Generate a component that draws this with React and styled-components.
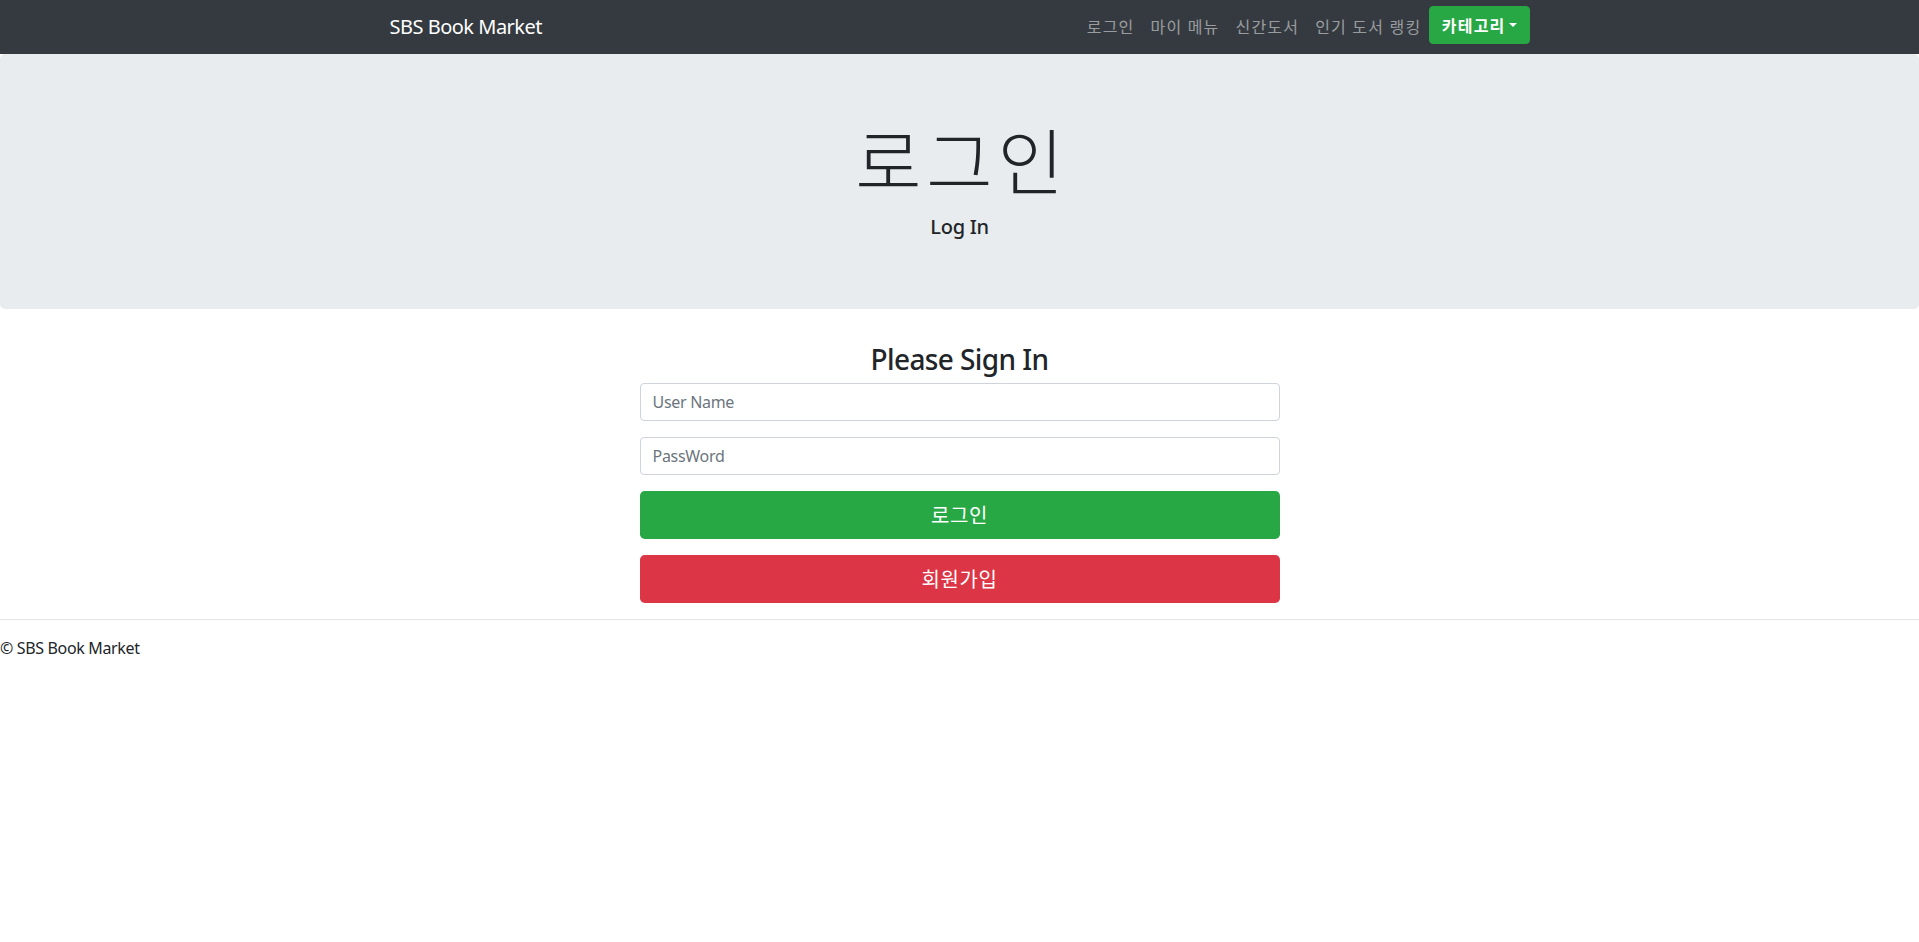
import React from "react";
import styled, { createGlobalStyle } from "styled-components";

const Global = createGlobalStyle`
  html, body { margin: 0; padding: 0; background: #fff; }
  body {
    font-family: "Noto Sans", "Noto Sans CJK KR", sans-serif;
    font-size: 16px;
    line-height: 1.5;
    color: #212529;
  }
  * { box-sizing: border-box; }
`;

const Navbar = styled.nav`
  background: #343a40;
  height: 54px;
`;

const NavContainer = styled.div`
  width: 1140px;
  height: 100%;
  margin: 0 auto;
  display: flex;
  align-items: center;
  justify-content: space-between;
`;

const Brand = styled.a`
  color: #fff;
  font-size: 20px;
  line-height: 30px;
  letter-spacing: -0.5px;
  text-decoration: none;
`;

const NavList = styled.div`
  display: flex;
  align-items: center;
`;

const NavLink = styled.a`
  color: rgba(255, 255, 255, 0.5);
  padding: 8px 7.4px 8px 8.6px;
  font-size: 16px;
  letter-spacing: 1.2px;
  text-decoration: none;
  white-space: nowrap;
`;

const DropButton = styled.button`
  display: flex;
  align-items: center;
  height: 38px;
  margin-bottom: 4px;
  padding: 6px 12px;
  border: 1px solid #28a745;
  border-radius: 4px;
  background: #28a745;
  color: #fff;
  font-family: inherit;
  font-size: 16px;
  font-weight: 700;
  letter-spacing: 1.2px;
  cursor: pointer;
  &::after {
    content: "";
    display: inline-block;
    margin-left: 3px;
    border-top: 4.8px solid #fff;
    border-left: 4.8px solid transparent;
    border-right: 4.8px solid transparent;
  }
`;

const Jumbotron = styled.header`
  background: #e9ecef;
  border-radius: 4.8px;
  padding: 64px 32px 67px;
  margin-bottom: 32px;
  text-align: center;
`;

const Display = styled.h1`
  margin: 0 0 8px;
  font-size: 72px;
  font-weight: 300;
  line-height: 1.2;
  letter-spacing: 5px;
  text-indent: 5px;
`;

const Lead = styled.p`
  margin: 0;
  font-size: 20px;
  line-height: 30px;
  font-weight: 500;
  letter-spacing: -0.3px;
`;

const Form = styled.form`
  width: 640px;
  margin: 0 auto;
  display: flex;
  flex-direction: column;
`;

const Heading = styled.h3`
  margin: 0 0 6px;
  padding-top: 2px;
  font-size: 28px;
  font-weight: 500;
  line-height: 1.2;
  letter-spacing: -0.6px;
  text-align: center;
`;

const Input = styled.input`
  height: 38px;
  padding: 6px 12px;
  margin-bottom: 16px;
  border: 1px solid #ced4da;
  border-radius: 4px;
  font-family: inherit;
  font-size: 16px;
  letter-spacing: -0.3px;
  color: #495057;
  &::placeholder { color: #6c757d; }
`;

const BigButton = styled.button`
  height: 48px;
  border: none;
  border-radius: 4.8px;
  background: ${(p) => p.$bg};
  color: #fff;
  font-family: inherit;
  font-size: 20px;
  letter-spacing: 0.6px;
  margin-bottom: ${(p) => p.$mb}px;
  cursor: pointer;
`;

const Rule = styled.hr`
  margin: 16px 0;
  border: 0;
  border-top: 1px solid rgba(0, 0, 0, 0.1);
`;

const FooterText = styled.p`
  margin: 0 0 16px;
  font-size: 16px;
  letter-spacing: -0.35px;
`;

export default function App() {
  return (
    <>
      <Global />
      <Navbar>
        <NavContainer>
          <Brand href="#">SBS Book Market</Brand>
          <NavList>
            <NavLink href="#">로그인</NavLink>
            <NavLink href="#">마이 메뉴</NavLink>
            <NavLink href="#">신간도서</NavLink>
            <NavLink href="#">인기 도서 랭킹</NavLink>
            <DropButton type="button">카테고리</DropButton>
          </NavList>
        </NavContainer>
      </Navbar>
      <Jumbotron>
        <Display>로그인</Display>
        <Lead>Log In</Lead>
      </Jumbotron>
      <Form onSubmit={(e) => e.preventDefault()}>
        <Heading>Please Sign In</Heading>
        <Input placeholder="User Name" />
        <Input type="password" placeholder="PassWord" />
        <BigButton type="submit" $bg="#28a745" $mb={16}>로그인</BigButton>
        <BigButton type="button" $bg="#dc3545" $mb={0}>회원가입</BigButton>
      </Form>
      <footer>
        <Rule />
        <FooterText>© SBS Book Market</FooterText>
      </footer>
    </>
  );
}
